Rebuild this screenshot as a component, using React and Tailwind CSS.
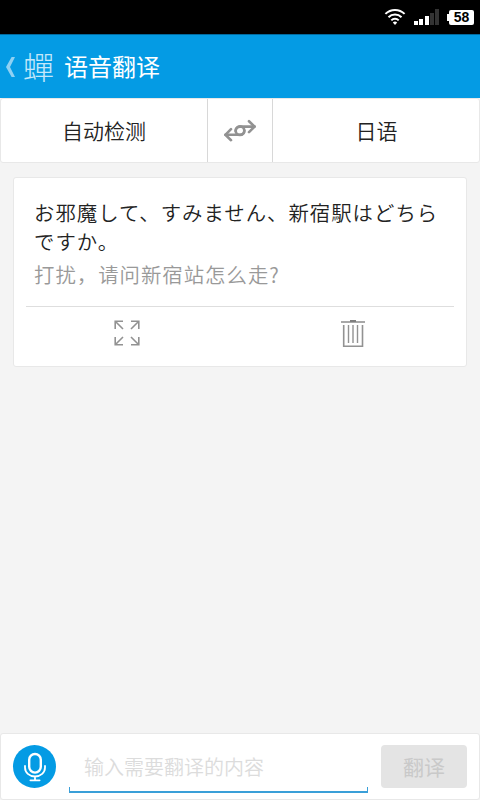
const WifiIcon = () => (
  <svg width="22" height="18" viewBox="0 0 22 18" fill="none" stroke="#fff">
    <path d="M1.4 5.9a13.6 13.6 0 0 1 19.2 0" strokeWidth="2" />
    <path d="M4.5 9.3a9.2 9.2 0 0 1 13 0" strokeWidth="2" />
    <path d="M7.3 12.4a5.2 5.2 0 0 1 7.4 0" strokeWidth="2" />
    <path d="M8.8 14.6a3 3 0 0 1 4.4 0L11 17z" fill="#fff" stroke="none" />
  </svg>
);

const SignalIcon = () => (
  <svg width="26" height="16" viewBox="0 0 26 16" fill="#fff">
    <path d="M0 12h4v4H0zM5 10h4v6H5zM11 7h4v9h-4z" />
    <path d="M16 4h4v12h-4zM21 0h4v16h-4z" fill="#333" />
  </svg>
);

const SwapIcon = () => (
  <svg
    width="34"
    height="24"
    viewBox="0 0 34 24"
    fill="none"
    stroke="#929292"
    strokeWidth="2.6"
    strokeLinecap="round"
    strokeLinejoin="round"
  >
    <path d="M2.4 15.8h14.4c2.8 0 4.6-1.9 4.6-4.3" />
    <path d="M31.6 7.6H17.2c-2.8 0-4.6 1.9-4.6 4.3" />
    <circle cx="17" cy="11.7" r="4.3" />
    <path d="M8 10.2L2.4 15.8 8 21.2M26 2.2L31.6 7.6 26 13.2" />
  </svg>
);

const ExpandIcon = () => (
  <svg
    width="26"
    height="26"
    viewBox="0 0 26 26"
    fill="none"
    stroke="#929292"
    strokeWidth="1.6"
  >
    <path d="M1.2 9V1.2H9M1.2 1.2L9 9" />
    <path d="M17 1.2h7.8V9M24.8 1.2L17 9" />
    <path d="M1.2 17v7.8H9M1.2 24.8L9 17" />
    <path d="M17 24.8h7.8V17M24.8 24.8L17 17" />
  </svg>
);

const TrashIcon = () => (
  <svg width="24" height="28" viewBox="0 0 24 28" fill="none" stroke="#929292">
    <path d="M0 2h24" strokeWidth="2" stroke="#a8a8a8" />
    <path d="M9 1h6" strokeWidth="2" stroke="#7f7f7f" />
    <path d="M2.7 5v21.3h18.8V5" strokeWidth="1.6" />
    <path d="M7.5 5v18M12 5v18M16.5 5v18" strokeWidth="1.4" />
  </svg>
);

const MicIcon = () => (
  <svg
    width="24"
    height="30"
    viewBox="0 0 24 30"
    fill="none"
    stroke="#fff"
    strokeLinecap="round"
  >
    <rect x="6.2" y="2" width="11.6" height="18.6" rx="5.8" strokeWidth="2.4" />
    <path
      d="M2 14v1.6c0 5 4.2 8.9 10 8.9s10-3.9 10-8.9V14M12 25v3M7.4 28.3h9.2"
      strokeWidth="1.8"
    />
  </svg>
);

const StatusBar = () => (
  <div className="flex h-[34px] shrink-0 items-center justify-end bg-black pr-[6px]">
    <WifiIcon />
    <div className="ml-2">
      <SignalIcon />
    </div>
    <span className="ml-[7px] h-[7px] w-[2px] bg-white" />
    <span className="flex h-[15px] w-[25px] items-center justify-center rounded-[2px] bg-white font-['Liberation_Sans',sans-serif] text-[14px] leading-none font-bold text-black">
      58
    </span>
  </div>
);

const App = () => {
  return (
    <main className="flex h-[800px] w-[480px] flex-col overflow-hidden bg-[#f4f4f4] font-['Noto_Sans_CJK_SC',sans-serif] text-[#222]">
      <StatusBar />

      <header className="flex h-16 shrink-0 items-center border-t border-[#026a9f] bg-[#049be4] pl-[6px] text-white">
        <svg width="9" height="20" viewBox="0 0 9 20" fill="#8fd1f3">
          <path d="M5.6 0H9L4 10l5 10H5.6L0 10z" />
        </svg>
        <span className="ml-2 pb-[2px] font-['Noto_Sans_CJK_TC',sans-serif] text-[31px] leading-none font-light text-[#c4e8fa]">
          蟬
        </span>
        <h1 className="ml-[10px] pb-[2px] text-2xl leading-none font-normal">
          语音翻译
        </h1>
      </header>

      <nav className="flex h-[65px] shrink-0 rounded-[3px] border border-[#e8e8e8] bg-white text-[21px] leading-none font-[350]">
        <button type="button" className="w-[206px]">
          自动检测
        </button>
        <button
          type="button"
          className="flex w-[66px] items-center justify-center border-x border-[#d8d8d8]"
        >
          <SwapIcon />
        </button>
        <button type="button" className="flex-1 pl-px">
          日语
        </button>
      </nav>

      <section className="mx-[13px] mt-[14px] flex h-[190px] shrink-0 flex-col rounded-[3px] border border-[#e8e8e8] bg-white px-3">
        <div className="px-2 pt-5 text-[20.4px] tracking-[1px]">
          <p
            lang="ja"
            className="font-['Noto_Sans_CJK_JP',sans-serif] leading-[29px] font-[350] whitespace-nowrap"
          >
            お邪魔して、すみません、新宿駅はどちら
            <br />
            ですか。
          </p>
          <p className="mt-[3px] leading-[30px] font-[350] text-[#999]">
            打扰，请问新宿站怎么走?
          </p>
        </div>
        <div className="mt-[17px] grid flex-1 grid-cols-2 border-t border-[#dedede]">
          <button
            type="button"
            className="flex items-start justify-center pt-[13px] pr-[13px]"
          >
            <ExpandIcon />
          </button>
          <button
            type="button"
            className="flex items-start justify-center pt-[13px] pl-[12px]"
          >
            <TrashIcon />
          </button>
        </div>
      </section>

      <footer className="mt-auto flex h-[67px] shrink-0 items-center rounded-[3px] border border-[#e8e8e8] bg-white pr-3 pl-3">
        <button
          type="button"
          className="flex size-[43px] shrink-0 items-center justify-center rounded-full bg-[#049be4]"
        >
          <MicIcon />
        </button>
        <div className="ml-[13px] flex h-full w-[299px] flex-col">
          <span className="pt-[23px] pl-[15px] text-[20px] leading-5 font-[350] text-[#dcdcdc]">
            输入需要翻译的内容
          </span>
          <span className="mt-auto mb-[6px] h-[6px] border-x border-b-2 border-[#3a9fd8]" />
        </div>
        <button
          type="button"
          className="ml-[13px] h-[43px] w-[86px] rounded-[4px] bg-[#e4e4e4] text-[21px] leading-none text-[#c9c9c9]"
        >
          翻译
        </button>
      </footer>
    </main>
  );
};

export default App;
